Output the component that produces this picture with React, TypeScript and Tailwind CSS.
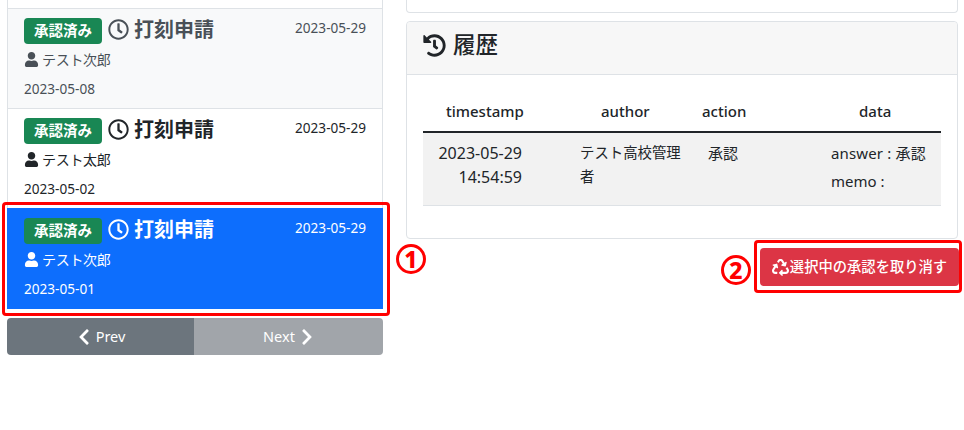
import { FaRegClock, FaUser, FaHistory, FaRecycle, FaChevronLeft, FaChevronRight } from "react-icons/fa";

const font = { fontFamily: '"Noto Sans", "Noto Sans CJK JP", sans-serif' };

function Item({ cls, date, name, tone }: { cls: string; date: string; name: string; tone: string }) {
  return (
    <div className={`h-[100px] border-x border-t px-4 pt-[7px] ${cls} ${tone}`}>
      <div className="flex h-[27px] items-center">
        <span className="mt-[2px] flex h-[26px] w-[78px] items-center justify-center rounded-[4px] bg-[#198754] text-[14.5px] font-bold text-white">承認済み</span>
        <FaRegClock className="ml-[6px] text-[21px]" />
        <span className="ml-[5px] text-[20px] leading-[27px] font-bold">打刻申請</span>
        <span className="mb-[3px] ml-auto text-[13.6px]">2023-05-29</span>
      </div>
      <div className="mt-[4px] flex h-[24px] items-center text-[14px]">
        <FaUser className="text-[15px]" />
        <span className="ml-[3px] tracking-[-0.3px]">{name}</span>
      </div>
      <div className="mt-[6px] text-[13.6px] leading-[24px]">{date}</div>
    </div>
  );
}

export default function App() {
  return (
    <div className="relative flex h-[430px] w-[964px] overflow-hidden bg-white text-[#212529]" style={font}>
      <div className="ml-[7px] flex w-[376px] flex-col">
        <div className="h-[8px] border-x border-[#dee2e6]" />
        <Item cls="border-[#dee2e6] bg-[#f8f9fa]" tone="text-[#495057]" name="テスト次郎" date="2023-05-08" />
        <Item cls="border-[#dee2e6] bg-white" tone="text-[#212529]" name="テスト太郎" date="2023-05-02" />
        <Item cls="h-[101px] border-[#0d6efd] bg-[#0d6efd]" tone="text-white" name="テスト次郎" date="2023-05-01" />
        <div className="mt-[9px] flex h-[37px] overflow-hidden rounded-[4px] text-[14.5px] text-white">
          <div className="flex w-[187px] items-center justify-center gap-[3px] bg-[#6c757d] pr-[1px]">
            <FaChevronLeft className="text-[18px]" />
            <span>Prev</span>
          </div>
          <div className="flex flex-1 items-center justify-center gap-[3px] bg-[#a1a5aa] pl-[2px]">
            <span>Next</span>
            <FaChevronRight className="text-[18px]" />
          </div>
        </div>
      </div>

      <div className="ml-[23px] flex w-[552px] flex-col">
        <div className="h-[13px] rounded-b-[4px] border-x border-b border-[#dee2e6]" />
        <div className="mt-[8px] h-[218px] rounded-[4px] border border-[#dee2e6]">
          <div className="flex h-[53px] items-center gap-[7px] rounded-t-[4px] border-b border-[#dee2e6] bg-[#f7f7f7] px-4 pb-[6px]">
            <FaHistory className="text-[23px]" />
            <span className="text-[22.5px] font-medium">履歴</span>
          </div>
          <table className="mx-4 mt-[16px] w-[518px] table-fixed border-collapse text-[15px]">
            <colgroup>
              <col className="w-[149px]" />
              <col className="w-[128px]" />
              <col className="w-[123px]" />
              <col className="w-[118px]" />
            </colgroup>
            <thead>
              <tr className="h-[41px] border-b-2 border-[#212529] text-left font-medium">
                <th className="pl-[23px] font-medium">timestamp</th>
                <th className="pl-[29px] font-medium">author</th>
                <th className="pl-[2px] font-medium">action</th>
                <th className="pl-[36px] font-medium">data</th>
              </tr>
            </thead>
            <tbody>
              <tr className="h-[73px] border-b border-[#dee2e6] bg-[#f2f2f2] align-top leading-[24px]">
                <td className="pt-2 pr-[50px] text-right text-[16px]">
                  <div className="whitespace-nowrap">2023-05-29</div>
                  <div>14:54:59</div>
                </td>
                <td className="pt-2 pr-[12px] pl-2 text-[14.4px]">テスト高校管理者</td>
                <td className="pt-2 pl-2 text-[15px]">承認</td>
                <td className="pt-2 pl-2 text-[15px]">
                  <div className="whitespace-nowrap tracking-[0.15px]">answer : 承認</div>
                  <div className="mt-[4px]">memo :</div>
                </td>
              </tr>
            </tbody>
          </table>
        </div>
        <div className="mt-[9px] flex justify-end">
          <div className="mr-[-1px] flex h-[38px] w-[199px] items-center justify-center gap-[1px] rounded-[4px] bg-[#dc3545] text-[14.3px] font-medium text-white">
            <FaRecycle className="text-[17px]" />
            <span>選択中の承認を取り消す</span>
          </div>
        </div>
      </div>

      <div className="absolute top-[202px] left-[2px] h-[114px] w-[388px] rounded-[4px] border-[3px] border-[#ff0000]" />
      <div className="absolute top-[240px] left-[754px] h-[53px] w-[208px] rounded-[4px] border-[3px] border-[#ff0000]" />
      <div className="absolute top-[244px] left-[396px] flex h-[30px] w-[30px] items-center justify-center rounded-full border-[3px] border-[#ff0000] text-[23px] leading-none font-extrabold text-[#ff0000]">1</div>
      <div className="absolute top-[255px] left-[721px] flex h-[30px] w-[30px] items-center justify-center rounded-full border-[3px] border-[#ff0000] text-[23px] leading-none font-extrabold text-[#ff0000]">2</div>
    </div>
  );
}
